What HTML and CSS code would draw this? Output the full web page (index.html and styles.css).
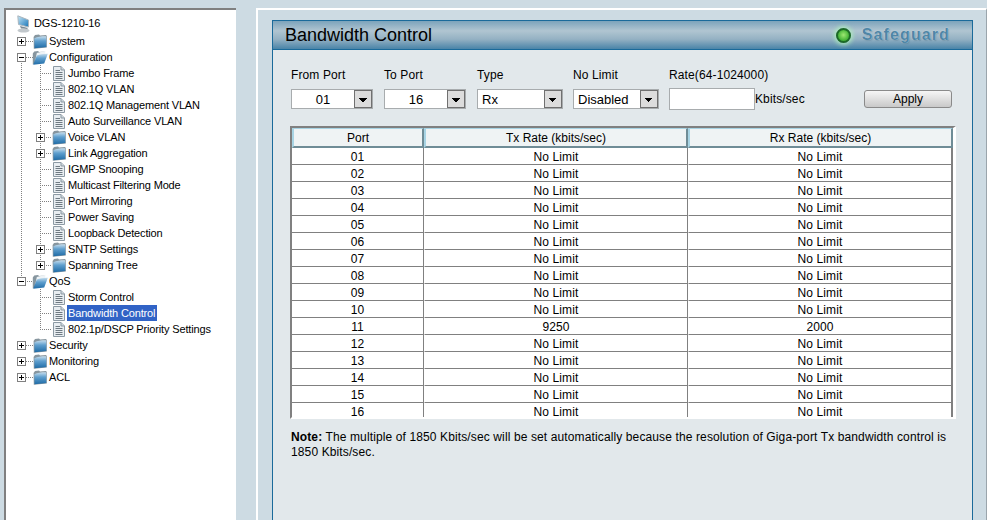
FILE: index.html
```html
<!DOCTYPE html>
<html lang="en">
<head>
<meta charset="utf-8">
<title>Bandwidth Control</title>
<link rel="stylesheet" href="styles.css">
</head>
<body>
<svg class="defs" aria-hidden="true">
  <defs>
    <linearGradient id="fb" x1="0" y1="0" x2="0" y2="1"><stop offset="0" stop-color="#c4dcec"/><stop offset=".4" stop-color="#5f9fce"/><stop offset="1" stop-color="#1f6ba6"/></linearGradient>
    <linearGradient id="sc" x1="0" y1="0" x2="1" y2="1"><stop offset="0" stop-color="#c9e8f7"/><stop offset="1" stop-color="#1875b8"/></linearGradient>
  </defs>
  <symbol id="folder" viewBox="0 0 14 15">
    <path d="M.6 3 L2 1 L6 .6 L7 1.5 L13 1 L13.8 2 L13.8 13.6 L.8 14.8 Z" fill="#87969f"/>
    <path d="M1.4 4.2 C4.5 2.8 10 2.2 13.2 2.4 L13.3 13.1 L1.5 14.2 Z" fill="url(#fb)"/>
  </symbol>
  <symbol id="folder-open" viewBox="0 0 16 15">
    <path d="M.8 14.6 L.8 3.4 L2.2 1.4 L6 1 L7 2 L13 1.6 L13 7 Z" fill="#87969f"/>
    <path d="M3 12 L4.8 3 L13.4 .8 L13 7 Z" fill="#eef3f6"/>
    <path d="M1.2 14.8 L4.8 5.6 C8 4.4 12 3.6 15.8 3.8 L12.2 13.4 Z" fill="url(#fb)"/>
  </symbol>
  <symbol id="page" viewBox="0 0 12 15">
    <path d="M.5 .5 H8 L11.5 4 V14.5 H.5 Z" fill="#e8edf1" stroke="#8d9aa4"/>
    <path d="M8 .5 V4 H11.5" fill="#ccd6dc" stroke="#8d9aa4"/>
    <path d="M2.5 4.5 H7 M2.5 6.5 H9.5 M2.5 8.5 H9.5 M2.5 10.5 H9.5 M2.5 12.5 H9.5" stroke="#6f7a82"/>
  </symbol>
  <symbol id="computer" viewBox="0 0 14 18">
    <path d="M.8 .8 L11.5 5 L11.5 12 L1.5 9.5 Z" fill="url(#sc)" stroke="#a9b5bd"/>
    <path d="M3 11 L11 13 L10 14 L4 13.5 Z" fill="#7c8a94"/>
    <ellipse cx="6.5" cy="15.5" rx="6" ry="2" fill="#c2c8cc"/>
  </symbol>
</svg>

<div class="page">
  <nav class="tree">
    <div class="row root"><svg class="ic-pc"><use href="#computer"/></svg><span class="lbl">DGS-1210-16</span></div>

    <div class="row"><span class="tw h"><i class="box plus"></i></span><svg class="ic"><use href="#folder"/></svg><span class="lbl">System</span></div>
    <div class="row"><span class="tw h vd"><i class="box minus"></i></span><svg class="ic-open"><use href="#folder-open"/></svg><span class="lbl">Configuration</span></div>

    <div class="row"><span class="ind v"></span><span class="tw h v"></span><svg class="ic"><use href="#page"/></svg><span class="lbl">Jumbo Frame</span></div>
    <div class="row"><span class="ind v"></span><span class="tw h v"></span><svg class="ic"><use href="#page"/></svg><span class="lbl">802.1Q VLAN</span></div>
    <div class="row"><span class="ind v"></span><span class="tw h v"></span><svg class="ic"><use href="#page"/></svg><span class="lbl">802.1Q Management VLAN</span></div>
    <div class="row"><span class="ind v"></span><span class="tw h v"></span><svg class="ic"><use href="#page"/></svg><span class="lbl">Auto Surveillance VLAN</span></div>
    <div class="row"><span class="ind v"></span><span class="tw h v"><i class="box plus"></i></span><svg class="ic"><use href="#folder"/></svg><span class="lbl">Voice VLAN</span></div>
    <div class="row"><span class="ind v"></span><span class="tw h v"><i class="box plus"></i></span><svg class="ic"><use href="#folder"/></svg><span class="lbl">Link Aggregation</span></div>
    <div class="row"><span class="ind v"></span><span class="tw h v"></span><svg class="ic"><use href="#page"/></svg><span class="lbl">IGMP Snooping</span></div>
    <div class="row"><span class="ind v"></span><span class="tw h v"></span><svg class="ic"><use href="#page"/></svg><span class="lbl">Multicast Filtering Mode</span></div>
    <div class="row"><span class="ind v"></span><span class="tw h v"></span><svg class="ic"><use href="#page"/></svg><span class="lbl">Port Mirroring</span></div>
    <div class="row"><span class="ind v"></span><span class="tw h v"></span><svg class="ic"><use href="#page"/></svg><span class="lbl">Power Saving</span></div>
    <div class="row"><span class="ind v"></span><span class="tw h v"></span><svg class="ic"><use href="#page"/></svg><span class="lbl">Loopback Detection</span></div>
    <div class="row"><span class="ind v"></span><span class="tw h v"><i class="box plus"></i></span><svg class="ic"><use href="#folder"/></svg><span class="lbl">SNTP Settings</span></div>
    <div class="row"><span class="ind v"></span><span class="tw h vu"><i class="box plus"></i></span><svg class="ic"><use href="#folder"/></svg><span class="lbl">Spanning Tree</span></div>

    <div class="row"><span class="tw h vu"><i class="box minus"></i></span><svg class="ic-open"><use href="#folder-open"/></svg><span class="lbl">QoS</span></div>
    <div class="row"><span class="ind"></span><span class="tw h v"></span><svg class="ic"><use href="#page"/></svg><span class="lbl">Storm Control</span></div>
    <div class="row"><span class="ind"></span><span class="tw h v"></span><svg class="ic"><use href="#page"/></svg><span class="lbl sel">Bandwidth Control</span></div>
    <div class="row"><span class="ind"></span><span class="tw h vu"></span><svg class="ic"><use href="#page"/></svg><span class="lbl">802.1p/DSCP Priority Settings</span></div>

    <div class="row"><span class="tw h"><i class="box plus"></i></span><svg class="ic"><use href="#folder"/></svg><span class="lbl">Security</span></div>
    <div class="row"><span class="tw h"><i class="box plus"></i></span><svg class="ic"><use href="#folder"/></svg><span class="lbl">Monitoring</span></div>
    <div class="row"><span class="tw h"><i class="box plus"></i></span><svg class="ic"><use href="#folder"/></svg><span class="lbl">ACL</span></div>
  </nav>

  <main class="frame">
    <section class="panel">
      <header class="bar">
        <h1 class="title">Bandwidth Control</h1>
        <div class="guard"><span class="led"></span><span class="guard-txt">Safeguard</span></div>
      </header>

      <form class="controls">
        <div class="field f93"><span class="flabel">From Port</span><div class="slot"><div class="select"><span class="val center">01</span><span class="arrow"></span></div></div></div>
        <div class="field f93"><span class="flabel">To Port</span><div class="slot"><div class="select"><span class="val center">16</span><span class="arrow"></span></div></div></div>
        <div class="field f96"><span class="flabel">Type</span><div class="slot"><div class="select s86"><span class="val">Rx</span><span class="arrow"></span></div></div></div>
        <div class="field f96"><span class="flabel">No Limit</span><div class="slot"><div class="select s86"><span class="val">Disabled</span><span class="arrow"></span></div></div></div>
        <div class="field"><span class="flabel">Rate(64-1024000)</span><div class="slot"><input class="rate" type="text" aria-label="Rate"><span class="unit">Kbits/sec</span></div></div>
        <div class="field push"><span class="flabel">&nbsp;</span><div class="slot"><button class="apply" type="button">Apply</button></div></div>
      </form>

      <table class="grid">
        <colgroup><col class="c1"><col class="c2"><col class="c3"></colgroup>
        <thead><tr><th>Port</th><th>Tx Rate (kbits/sec)</th><th>Rx Rate (kbits/sec)</th></tr></thead>
        <tbody>
          <tr><td>01</td><td>No Limit</td><td>No Limit</td></tr>
          <tr><td>02</td><td>No Limit</td><td>No Limit</td></tr>
          <tr><td>03</td><td>No Limit</td><td>No Limit</td></tr>
          <tr><td>04</td><td>No Limit</td><td>No Limit</td></tr>
          <tr><td>05</td><td>No Limit</td><td>No Limit</td></tr>
          <tr><td>06</td><td>No Limit</td><td>No Limit</td></tr>
          <tr><td>07</td><td>No Limit</td><td>No Limit</td></tr>
          <tr><td>08</td><td>No Limit</td><td>No Limit</td></tr>
          <tr><td>09</td><td>No Limit</td><td>No Limit</td></tr>
          <tr><td>10</td><td>No Limit</td><td>No Limit</td></tr>
          <tr><td>11</td><td>9250</td><td>2000</td></tr>
          <tr><td>12</td><td>No Limit</td><td>No Limit</td></tr>
          <tr><td>13</td><td>No Limit</td><td>No Limit</td></tr>
          <tr><td>14</td><td>No Limit</td><td>No Limit</td></tr>
          <tr><td>15</td><td>No Limit</td><td>No Limit</td></tr>
          <tr class="last"><td>16</td><td>No Limit</td><td>No Limit</td></tr>
        </tbody>
      </table>

      <p class="note"><b>Note:</b> The multiple of 1850 Kbits/sec will be set automatically because the resolution of Giga-port Tx bandwidth control is 1850 Kbits/sec.</p>
    </section>
  </main>
</div>
</body>
</html>
```

FILE: styles.css
```css
* { box-sizing: border-box; }
html, body { margin: 0; height: 100%; }
body {
  background: #cddbe3;
  color: #000;
  font: 12px/16px "Liberation Sans", Arial, sans-serif;
  overflow: hidden;
}
.defs { width: 0; height: 0; display: block; }
.page { display: flex; height: 520px; padding: 8px 0 0 4px; }

/* tree */
.tree {
  width: 232px;
  flex: none;
  background: #fff;
  border-top: 2px solid #808080;
  border-left: 2px solid #808080;
  padding: 5px 0 0 11px;
  font-size: 11px;
  letter-spacing: -.15px;
}
.row { display: flex; align-items: center; height: 16px; white-space: nowrap; }
.root { height: 18px; align-items: flex-start; }
.ic-pc { width: 14px; height: 18px; margin-right: 3px; }
.ind { width: 19px; height: 16px; flex: none; }
.tw { width: 16px; height: 16px; flex: none; display: flex; align-items: center; background-repeat: no-repeat; }
.ic { width: 14px; height: 15px; flex: none; margin-right: 2px; }
.ic-open { width: 16px; height: 15px; flex: none; margin: 0 1px 0 -1px; }
.lbl { padding: 0 1px; height: 16px; line-height: 16px; margin-left: -1px; }
.sel { background: #3163c6; color: #fff; padding-right: 2px; }

.h { background-image: repeating-linear-gradient(90deg, #808080 0 1px, transparent 1px 2px); background-size: 7px 1px; background-position: 9px 8px; background-repeat: no-repeat; }
.h.v { background-image: repeating-linear-gradient(90deg, #808080 0 1px, transparent 1px 2px), repeating-linear-gradient(#808080 0 1px, transparent 1px 2px); background-size: 11px 1px, 1px 16px; background-position: 4px 8px, 4px 0; background-repeat: no-repeat; }
.v { background-image: repeating-linear-gradient(#808080 0 1px, transparent 1px 2px); background-size: 1px 16px; background-position: 4px 0; background-repeat: no-repeat; }
.h.vd { background-image: repeating-linear-gradient(90deg, #808080 0 1px, transparent 1px 2px), repeating-linear-gradient(#808080 0 1px, transparent 1px 2px); background-size: 7px 1px, 1px 8px; background-position: 9px 8px, 4px 8px; background-repeat: no-repeat; }
.h.vu { background-image: repeating-linear-gradient(90deg, #808080 0 1px, transparent 1px 2px), repeating-linear-gradient(#808080 0 1px, transparent 1px 2px); background-size: 11px 1px, 1px 8px; background-position: 4px 8px, 4px 0; background-repeat: no-repeat; }

.box {
  width: 9px; height: 9px; display: block; flex: none;
  border: 1px solid #808080;
  background-color: #fff;
  background-repeat: no-repeat;
}
.minus { background-image: linear-gradient(#000, #000); background-size: 5px 1px; background-position: 1px 3px; }
.plus {
  background-image: linear-gradient(#000, #000), linear-gradient(#000, #000);
  background-size: 5px 1px, 1px 5px;
  background-position: 1px 3px, 3px 1px;
}

/* content frame */
.frame {
  flex: 1;
  min-width: 0;
  margin-left: 20px;
  border-top: 2px solid #fff;
  border-left: 2px solid #fff;
  border-right: 1px solid #9aa5ac;
  padding: 10px 13px 0 14px;
  display: flex;
}
.panel {
  flex: 1;
  min-width: 0;
  background: #e2e8eb;
  border: 1px solid #1a6a9a;
  border-bottom: 0;
  letter-spacing: .12px;
}
.bar {
  height: 30px;
  margin-top: -1px;
  display: flex;
  align-items: center;
  justify-content: space-between;
  padding: 0 22px 0 12px;
  border-top: 1px solid #1a6a9a;
  border-bottom: 1px solid #1a6a9a;
  background: linear-gradient(#7ca3bb 0, #b0c5d1 35%, #94b1c3 65%, #4a84a8 100%);
}
.title { margin: 0; font-size: 18px; font-weight: 400; line-height: 26px; color: #000; letter-spacing: 0; }
.guard { display: flex; align-items: center; gap: 11px; }
.led {
  width: 15px; height: 15px; border-radius: 50%;
  border: 2px solid #1c6a26;
  background: radial-gradient(circle at 50% 45%, #9ee873 0, #4db93c 60%, #2a8c2c 100%);
  box-shadow: 0 0 4px 2px rgba(175, 240, 190, .85);
}
.guard-txt {
  font-size: 16px; font-weight: 700; letter-spacing: 1.1px; line-height: 18px;
  color: #4f86a6;
  text-shadow: 0 0 1px #e4eef3, 1px 1px 1px rgba(60, 100, 125, .35);
}

/* form */
.controls { display: flex; padding: 17px 20px 0 18px; }
.field { display: flex; flex-direction: column; gap: 5px; }
.f93 { width: 93px; }
.f96 { width: 96px; }
.push { margin-left: auto; }
.flabel { display: block; height: 16px; }
.slot { display: flex; align-items: center; height: 22px; }
.select {
  display: flex;
  width: 82px; height: 20px;
  background: #fff;
  border: 1px solid #a8acae;
  font-size: 13px;
  line-height: 20px;
  letter-spacing: 0;
}
.s86 { width: 86px; }
.val { flex: 1; padding-left: 4px; }
.center { padding-left: 0; text-align: center; }
.arrow {
  width: 18px; flex: none;
  border: 1px solid #707070;
  background-color: #dcdcdc;
  background-image: linear-gradient(45deg, transparent 50%, #000 50%), linear-gradient(-45deg, transparent 50%, #000 50%);
  background-size: 4px 4px, 4px 4px;
  background-position: 4px 7px, 8px 7px;
  background-repeat: no-repeat;
}
.rate {
  width: 86px; height: 22px; padding: 0;
  background: #fff;
  border: 1px solid #a8acae;
  border-radius: 0;
  outline: 0;
}
.apply {
  width: 88px; height: 18px; padding: 0;
  font: 12px/16px "Liberation Sans", Arial, sans-serif;
  color: #000;
  background: linear-gradient(#f6f6f6, #c9c9c9);
  border: 1px solid #8a8a8a;
  border-radius: 3px;
}

/* table */
.grid {
  width: 666px;
  margin: 16px 0 0 17px;
  table-layout: fixed;
  border-collapse: separate;
  border-spacing: 0;
  background: #fff;
  border-style: solid;
  border-width: 2px 3px 2px 2px;
  border-color: #808080 #fff #fff #808080;
}
.c1 { width: 132px; }
.c2 { width: 264px; }
.c3 { width: 265px; }
th {
  height: 20px; padding: 0;
  font-weight: 400;
  line-height: 16px;
  letter-spacing: 0;
  background: #eff3f4;
  border-style: solid;
  border-width: 1px 2px 2px 2px;
  border-color: #a8d4e4 #6f8c96 #6f8c96 #a8d4e4;
}
td {
  height: 17px; padding: 2px 0 0;
  text-align: center;
  line-height: 14px;
  border-right: 1px solid #808080;
  border-bottom: 1px solid #808080;
  border-left: 1px solid #fff;
}
td:first-child { border-left: 0; }
td:last-child { border-right-width: 2px; }
.last td { height: 14px; border-bottom: 0; line-height: 10px; padding-top: 4px; }

.note { margin: 11px 0 0 18px; width: 664px; line-height: 15px; }
```
